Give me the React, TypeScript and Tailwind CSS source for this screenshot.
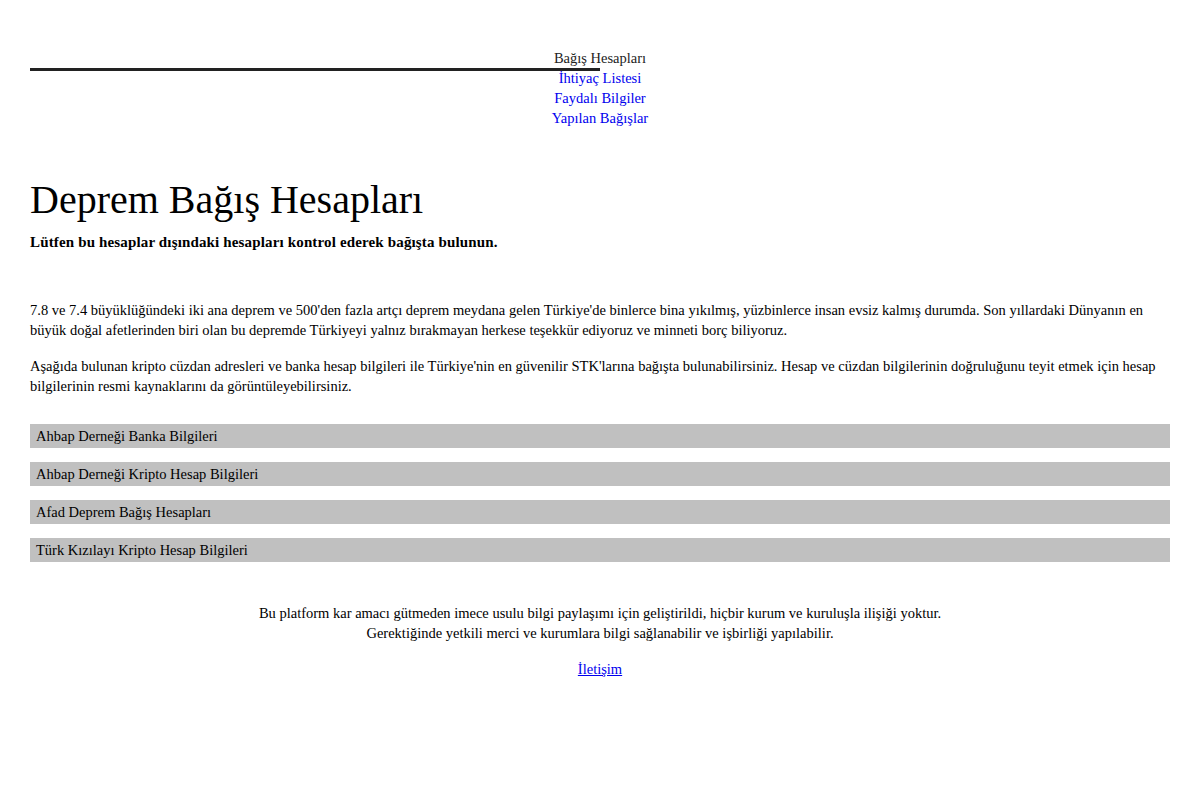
import React from 'react';

const navItems = [
  { label: 'Bağış Hesapları', active: true },
  { label: 'İhtiyaç Listesi' },
  { label: 'Faydalı Bilgiler' },
  { label: 'Yapılan Bağışlar' },
];

const accounts = [
  'Ahbap Derneği Banka Bilgileri',
  'Ahbap Derneği Kripto Hesap Bilgileri',
  'Afad Deprem Bağış Hesapları',
  'Türk Kızılayı Kripto Hesap Bilgileri',
];

const App: React.FC = () => {
  return (
    <div className="min-h-[800px] bg-white px-[30px] font-['Liberation_Serif',serif] text-[14.5px] leading-5 text-black">
      <nav className="relative pt-[48px]">
        {/* the dark rule that runs under the first nav item */}
        <div className="absolute left-0 top-[68px] h-[3px] w-[570px] bg-[#222222]" />
        <ul className="flex flex-col items-center">
          {navItems.map((item) => (
            <li key={item.label}>
              {item.active ? (
                <span className="text-[#222222]">{item.label}</span>
              ) : (
                <a href="#" className="text-[#0000ee]">
                  {item.label}
                </a>
              )}
            </li>
          ))}
        </ul>
      </nav>

      <h1 className="mt-[52px] text-[40px] leading-10">Deprem Bağış Hesapları</h1>
      <p className="mt-3 text-[15px] font-bold tracking-[0.15px]">
        Lütfen bu hesaplar dışındaki hesapları kontrol ederek bağışta bulunun.
      </p>

      <p className="mt-12">
        7.8 ve 7.4 büyüklüğündeki iki ana deprem ve 500'den fazla artçı deprem meydana gelen Türkiye'de binlerce bina
        yıkılmış, yüzbinlerce insan evsiz kalmış durumda. Son yıllardaki Dünyanın en büyük doğal afetlerinden biri olan bu
        depremde Türkiyeyi yalnız bırakmayan herkese teşekkür ediyoruz ve minneti borç biliyoruz.
      </p>
      <p className="mt-4">
        Aşağıda bulunan kripto cüzdan adresleri ve banka hesap bilgileri ile Türkiye'nin en güvenilir STK'larına bağışta
        bulunabilirsiniz. Hesap ve cüzdan bilgilerinin doğruluğunu teyit etmek için hesap bilgilerinin resmi kaynaklarını da
        görüntüleyebilirsiniz.
      </p>

      <div className="mt-7 flex flex-col gap-[14px]">
        {accounts.map((name) => (
          <div key={name} className="h-6 bg-[#c0c0c0] pl-[6px] leading-6">
            {name}
          </div>
        ))}
      </div>

      <footer className="mt-[41px] text-center">
        <p>
          Bu platform kar amacı gütmeden imece usulu bilgi paylaşımı için geliştirildi, hiçbir kurum ve kuruluşla ilişiği
          yoktur.
          <br />
          Gerektiğinde yetkili merci ve kurumlara bilgi sağlanabilir ve işbirliği yapılabilir.
        </p>
        <a href="#" className="mt-4 inline-block text-[#0000ee] underline">
          İletişim
        </a>
      </footer>
    </div>
  );
};

export default App;
